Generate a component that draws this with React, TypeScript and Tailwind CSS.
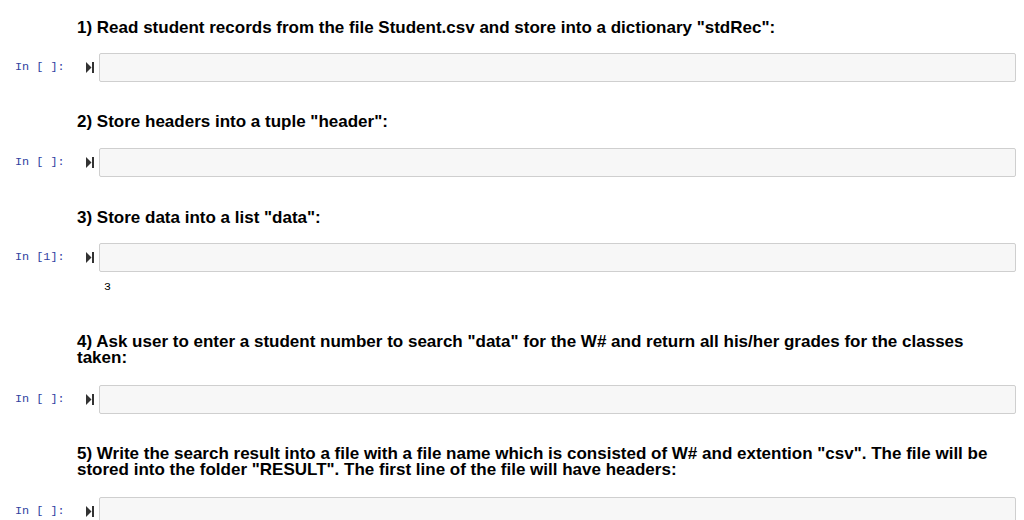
const RunIcon = () => (
  <svg width="8" height="11" viewBox="0 0 8 11">
    <path d="M0 0 L5.5 5.5 L0 11 Z" fill="#333" />
    <rect x="6" y="0" width="2" height="11" fill="#333" />
  </svg>
)

const Markdown = ({ text, className = '' }: { text: string; className?: string }) => (
  <div className={`pl-[77px] pr-[8px] pt-[1px] text-[17px] leading-[16px] font-bold text-black font-['Liberation_Sans',Arial,sans-serif] ${className}`}>
    {text}
  </div>
)

const CodeCell = ({ count = ' ', className = '' }: { count?: string; className?: string }) => (
  <div className={`flex items-center h-[29px] ${className}`}>
    <div className="w-[86px] pl-[15px] font-['Liberation_Mono',monospace] text-[11.8px] text-[#303f9f] whitespace-pre">
      {`In [${count}]:`}
    </div>
    <div className="w-[13px] flex items-center">
      <RunIcon />
    </div>
    <div className="flex-1 mr-[8px] h-full border border-[#cfcfcf] bg-[#f7f7f7] rounded-[2px]" />
  </div>
)

export default function App() {
  return (
    <div className="w-[1024px] h-[520px] overflow-hidden bg-white pt-[19px]">
      <Markdown text={'1) Read student records from the file Student.csv and store into a dictionary "stdRec":'} />
      <CodeCell className="mt-[17px]" />
      <Markdown className="mt-[31px]" text={'2) Store headers into a tuple "header":'} />
      <CodeCell className="mt-[18px]" />
      <Markdown className="mt-[32px]" text={'3) Store data into a list "data":'} />
      <CodeCell className="mt-[17px]" count="1" />
      <div className="mt-[8px] pl-[104px] font-['Liberation_Mono',monospace] text-[11.5px] leading-[14px] text-black">3</div>
      <Markdown
        className="mt-[39px]"
        text={'4) Ask user to enter a student number to search "data" for the W# and return all his/her grades for the classes taken:'}
      />
      <CodeCell className="mt-[19px]" />
      <Markdown
        className="mt-[31px]"
        text={'5) Write the search result into a file with a file name which is consisted of W# and extention "csv". The file will be stored into the folder "RESULT". The first line of the file will have headers:'}
      />
      <CodeCell className="mt-[19px]" />
    </div>
  )
}
